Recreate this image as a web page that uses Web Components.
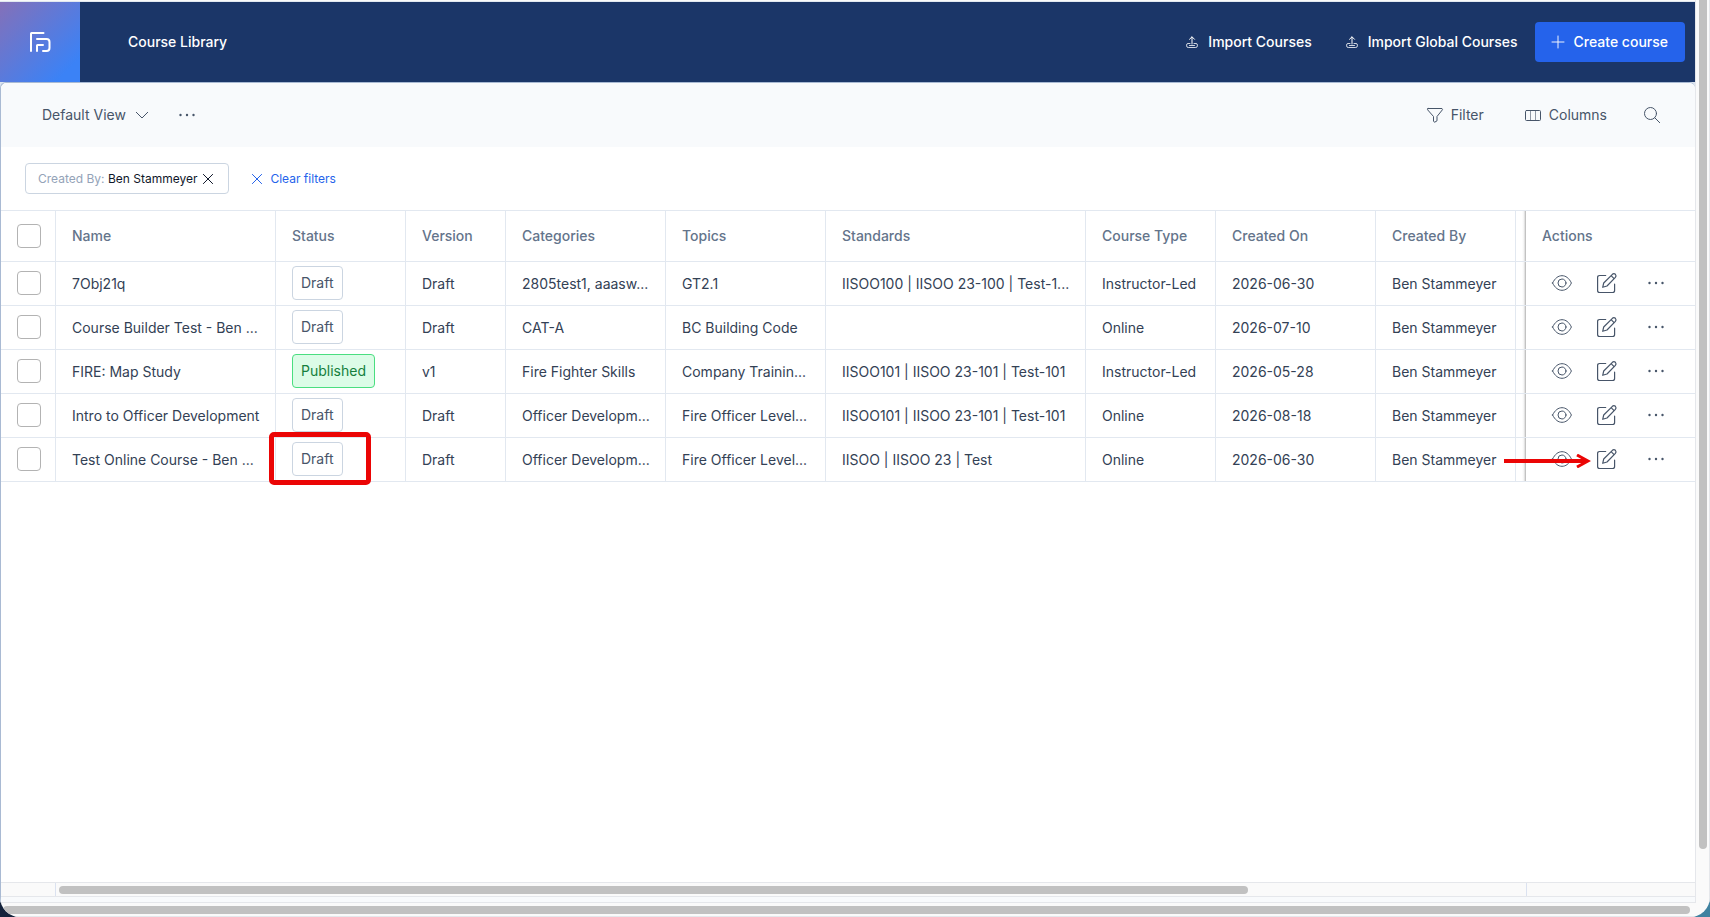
<!DOCTYPE html>
<html lang="en">
<head>
<meta charset="utf-8">
<title>Course Library</title>
<style>
body {
  margin: 0;
  background: linear-gradient(90deg, #14233c 0, #14233c 30%, #3f82a0 90%);
  color: #334155;
  font: 14px/20px Inter, "Liberation Sans", sans-serif;
}
</style>
</head>
<body>
<app-window>
  <app-header slot="header">
    <brand-logo slot="logo"></brand-logo>
    Course Library
    <ui-button slot="actions" kind="ghost" icon="upload" size="12">Import Courses</ui-button>
    <ui-button slot="actions" kind="ghost" icon="upload" size="12">Import Global Courses</ui-button>
    <ui-button slot="actions" kind="primary" icon="plus" size="12">Create course</ui-button>
  </app-header>
  <view-toolbar></view-toolbar>
  <filter-bar></filter-bar>
  <course-table></course-table>
</app-window>

<script>
const icons = {
  upload: ['0 0 12 12', '<path d="M6 8V1M3.500 3.300 6 .8l2.500 2.500"/><path stroke-opacity=".8" d="M4 7.500H2Q.6 7.500.6 9v.8q0 1.700 1.700 1.700h7.400q1.700 0 1.700-1.700V9q0-1.500-1.400-1.500H8M3.500 9.500h5"/>'],
  plus: ['0 0 13 13', '<path d="M6.500 0v13M0 6.500h13"/>'],
  chevron: ['0 0 12 12', '<path d="M.3 3.300 6 9l5.700-5.700"/>'],
  close: ['0 0 10 10', '<path d="m.4.4 9.200 9.200M9.600.4.4 9.600"/>'],
  dots: ['0 0 16 16', '<g fill="currentColor" stroke="none"><circle cx="1.500" cy="8" r="1.200"/><circle cx="8" cy="8" r="1.200"/><circle cx="14.500" cy="8" r="1.200"/></g>'],
  filter: ['0 0 16 16', '<path d="M1 1.500h14q.7.6.4 1.300L10 9.500v4.300L7.500 15.300 6.500 14V9.500L.6 2.800Q.4 2 1 1.500z"/>'],
  columns: ['0 0 16 16', '<path d="M1.500 3.500h13q1 0 1 1v8q0 1-1 1h-13q-1 0-1-1v-8q0-1 1-1z"/><path stroke-opacity=".6" d="M5.500 3.500v10M10.500 3.500v10"/>'],
  search: ['0 0 16 16', '<circle cx="6.500" cy="6.500" r="6"/><path d="m10.800 10.800 4.900 4.900"/>'],
  eye: ['0 0 20 20', '<path d="M.6 10C3 5 6.300 2.700 10 2.700S17 5 19.400 10C17 15 13.700 17.300 10 17.300S3 15 .6 10z"/><circle cx="10" cy="10" r="4"/>'],
  edit: ['0 0 20 20', '<g stroke-width="1.200"><path d="M8.700 2.500H2.600Q.6 2.500.6 4.500v13q0 2 2 2h13q2 0 2-2v-6.300"/><path d="M5.700 14.300l1-4.300L15.400 1.300q1.500-1.300 3 0 1.300 1.500 0 3L10 13zM14.100 2.600l3 3"/></g>']
}

function createTemplate (html) {
  const template = document.createElement('template')
  template.innerHTML = html
  return template
}

class BaseElement extends HTMLElement {
  constructor () {
    super()
    this.attachShadow({ mode: 'open' })
    this.shadowRoot.appendChild(this.constructor.template.content.cloneNode(true))
  }
}

class UiIcon extends BaseElement {
  static template = createTemplate(`
<style>
:host { display: inline-flex; flex: none; }
svg { display: block; overflow: visible; fill: none; stroke: currentColor; stroke-linecap: round; stroke-linejoin: round; }
</style>
<svg aria-hidden="true"></svg>
`)

  connectedCallback () {
    const svg = this.shadowRoot.querySelector('svg')
    const [box, shapes] = icons[this.getAttribute('name')]
    const size = this.getAttribute('size') || 16
    svg.setAttribute('viewBox', box)
    svg.setAttribute('width', size)
    svg.setAttribute('height', size)
    svg.innerHTML = shapes
  }
}
customElements.define('ui-icon', UiIcon)

class UiButton extends BaseElement {
  static template = createTemplate(`
<style>
:host { display: inline-flex; }
button {
  display: flex;
  align-items: center;
  gap: 8px;
  margin: 0;
  padding: 0;
  border: 0;
  border-radius: 4px;
  background: none;
  color: inherit;
  font: inherit;
  white-space: nowrap;
  cursor: pointer;
}
:host([kind]) button { gap: 10px; height: 40px; padding: 0 17px; color: #fff; font-weight: 500; }
:host([kind=primary]) button { background: #2563eb; }
:host([trailing]) button { flex-direction: row-reverse; gap: 10px; }
</style>
<button type="button"><slot></slot></button>
`)

  connectedCallback () {
    const button = this.shadowRoot.querySelector('button')
    const icon = document.createElement('ui-icon')
    icon.setAttribute('name', this.getAttribute('icon'))
    icon.setAttribute('size', this.getAttribute('size') || 16)
    button.prepend(icon)
    if (this.hasAttribute('label')) button.setAttribute('aria-label', this.getAttribute('label'))
  }
}
customElements.define('ui-button', UiButton)

class BrandLogo extends BaseElement {
  static template = createTemplate(`
<style>
:host {
  display: flex;
  align-items: center;
  justify-content: center;
  width: 80px;
  height: 80px;
  background: linear-gradient(135deg, #8470b8 0, #3b82f6 85%);
}
svg { fill: none; stroke: #fff; stroke-width: 2; stroke-linecap: round; stroke-linejoin: round; }
</style>
<svg width="22" height="22" viewBox="0 0 22 22" role="img" aria-label="Home">
  <path d="M2 20V2.500Q2 2 2.500 2H14.500M8 8h9.500q3 0 3 3v6q0 3-3 3H14M8 20v-5.500Q8 14 8.500 14H14"/>
</svg>
`)
}
customElements.define('brand-logo', BrandLogo)

class AppHeader extends BaseElement {
  static template = createTemplate(`
<style>
:host { display: block; background: #1b3668; color: #fff; }
header { display: flex; align-items: center; padding-right: 10px; }
h1 { flex: 1; margin: 0 48px; font: inherit; font-weight: 500; }
nav { display: flex; }
</style>
<header>
  <slot name="logo"></slot>
  <h1><slot></slot></h1>
  <nav><slot name="actions"></slot></nav>
</header>
`)
}
customElements.define('app-header', AppHeader)

class ViewToolbar extends BaseElement {
  static template = createTemplate(`
<style>
:host {
  display: flex;
  align-items: center;
  height: 64px;
  padding: 0 35px 0 41px;
  border-radius: 6px 6px 0 0;
  background: #f8fafc;
  color: #475569;
}
.views, .tools { display: flex; align-items: center; }
.views { flex: 1; gap: 31px; }
.tools { gap: 41px; }
.tools ui-button:last-child { margin-left: -4px; }
</style>
<div class="views">
  <ui-button icon="chevron" size="12" trailing>Default View</ui-button>
  <ui-button icon="dots" label="View options"></ui-button>
</div>
<div class="tools">
  <ui-button icon="filter">Filter</ui-button>
  <ui-button icon="columns">Columns</ui-button>
  <ui-button icon="search" label="Search"></ui-button>
</div>
`)
}
customElements.define('view-toolbar', ViewToolbar)

class FilterBar extends BaseElement {
  static template = createTemplate(`
<style>
:host { display: flex; align-items: center; gap: 23px; height: 63px; padding: 0 24px; font-size: 12px; }
.chip {
  display: flex;
  align-items: center;
  gap: 6px;
  height: 29px;
  padding: 0 15px 0 12px;
  border: 1px solid #cbd5e1;
  border-radius: 4px;
  color: #0f172a;
}
.chip span { color: #94a3b8; }
.clear { color: #2563eb; }
</style>
<div class="chip">
  <div><span>Created By:</span> Ben Stammeyer</div>
  <ui-button icon="close" size="10" label="Remove filter"></ui-button>
</div>
<ui-button class="clear" icon="close" size="10">Clear filters</ui-button>
`)
}
customElements.define('filter-bar', FilterBar)

class StatusBadge extends BaseElement {
  static template = createTemplate(`
<style>
:host {
  display: inline-block;
  padding: 6px 8px;
  border: 1px solid #cbd5e1;
  border-radius: 4px;
  background: #fff;
  color: #475569;
}
:host([published]) { border-color: #4ade80; background: #dcfce7; color: #15803d; }
</style>
<slot></slot>
`)
}
customElements.define('status-badge', StatusBadge)

class CalloutBox extends BaseElement {
  static template = createTemplate(`
<style>
:host {
  position: absolute;
  z-index: 2;
  inset: -6px 34px -4px -7px;
  border: 5px solid #eb0505;
  border-radius: 5px;
  pointer-events: none;
}
</style>
`)
}
customElements.define('callout-box', CalloutBox)

class CalloutArrow extends BaseElement {
  static template = createTemplate(`
<style>
:host { position: absolute; z-index: 2; top: 16px; left: -22px; pointer-events: none; }
svg { display: block; fill: none; stroke: #eb0505; }
</style>
<svg width="87" height="14" viewBox="0 0 87 14" aria-hidden="true">
  <path d="M0 7h82" stroke-width="4"/>
  <path d="M73 1l11 6-11 6" stroke-width="3"/>
</svg>
`)
}
customElements.define('callout-arrow', CalloutArrow)

const courses = [
  ['7Obj21q', 'Draft', 'Draft', '2805test1, aaasw...', 'GT2.1', 'IISOO100 | IISOO 23-100 | Test-1...', 'Instructor-Led', '2026-06-30'],
  ['Course Builder Test - Ben ...', 'Draft', 'Draft', 'CAT-A', 'BC Building Code', '', 'Online', '2026-07-10'],
  ['FIRE: Map Study', 'Published', 'v1', 'Fire Fighter Skills', 'Company Trainin...', 'IISOO101 | IISOO 23-101 | Test-101', 'Instructor-Led', '2026-05-28'],
  ['Intro to Officer Development', 'Draft', 'Draft', 'Officer Developm...', 'Fire Officer Level...', 'IISOO101 | IISOO 23-101 | Test-101', 'Online', '2026-08-18'],
  ['Test Online Course - Ben ...', 'Draft', 'Draft', 'Officer Developm...', 'Fire Officer Level...', 'IISOO | IISOO 23 | Test', 'Online', '2026-06-30', true]
]

class CourseTable extends BaseElement {
  static template = createTemplate(`
<style>
:host { display: flex; flex: 1; flex-direction: column; min-height: 0; }
.grid { flex: 1; min-height: 0; }
table { width: 100%; table-layout: fixed; border-collapse: separate; border-spacing: 0; border-top: 1px solid #e2e8f0; }
th, td {
  box-sizing: border-box;
  height: 44px;
  padding: 0 12px 0 16px;
  border-right: 1px solid #e2e8f0;
  border-bottom: 1px solid #e2e8f0;
  overflow: hidden;
  text-align: left;
  text-overflow: ellipsis;
  white-space: nowrap;
}
th { height: 51px; color: #64748b; font-weight: 500; }
.check { width: 55px; }
.name { width: 220px; }
.status, .type { width: 130px; }
.version { width: 100px; }
.categories, .topics, .on { width: 160px; }
.standards { width: 260px; }
.by { width: 140px; }
.actions { width: 169px; }
.fill { padding: 0; border-right: 0; }
.status, .actions { position: relative; overflow: visible; }
td.check, td.status, td.actions { padding-bottom: 2px; }
.actions { border-right: 0; background: #fff; }
.actions::before {
  content: "";
  position: absolute;
  top: 0;
  bottom: 0;
  left: -4px;
  width: 4px;
  background: linear-gradient(90deg, #0000, #0000000d 50%, #0000004d);
}
.buttons { display: flex; align-items: center; gap: 25px; padding-left: 10px; color: #475569; }
.buttons ui-button:last-child { margin-left: 6px; }
input {
  display: block;
  appearance: none;
  box-sizing: border-box;
  width: 24px;
  height: 24px;
  margin: 0;
  border: 1px solid #b3b3b3;
  border-radius: 4px;
  background: #fff;
}
.footer { display: flex; height: 13px; border: solid #e5e7eb; border-width: 1px 0; background: #fafafa; }
.footer .pin { box-sizing: border-box; width: 55px; border-right: 1px solid #dbe2f0; }
.footer .end { box-sizing: border-box; width: 169px; border-left: 1px solid #dbe2f0; }
.footer .track { flex: 1; padding: 3px; }
.footer .thumb { width: 81.2%; height: 8px; border-radius: 4px; background: #c1c1c1; }
.base { height: 5px; border-bottom: 1px solid #e5e7eb; background: #f8fafc; }
</style>
<div class="grid">
<table>
  <thead>
    <tr>
      <th class="check"><input type="checkbox" aria-label="Select all courses"></th>
      <th class="name">Name</th>
      <th class="status">Status</th>
      <th class="version">Version</th>
      <th class="categories">Categories</th>
      <th class="topics">Topics</th>
      <th class="standards">Standards</th>
      <th class="type">Course Type</th>
      <th class="on">Created On</th>
      <th class="by">Created By</th>
      <th class="fill"></th>
      <th class="actions">Actions</th>
    </tr>
  </thead>
  <tbody></tbody>
</table>
</div>
<div class="footer"><div class="pin"></div><div class="track"><div class="thumb"></div></div><div class="end"></div></div>
<div class="base"></div>
`)

  connectedCallback () {
    this.shadowRoot.querySelector('tbody').innerHTML = courses.map(c => this._row(c)).join('')
  }

  _row ([name, status, version, categories, topics, standards, type, created, marked]) {
    return `
<tr>
  <td class="check"><input type="checkbox" aria-label="Select ${name}"></td>
  <td>${name}</td>
  <td class="status"><status-badge${status === 'Published' ? ' published' : ''}>${status}</status-badge>${marked ? '<callout-box></callout-box>' : ''}</td>
  <td>${version}</td>
  <td>${categories}</td>
  <td>${topics}</td>
  <td>${standards}</td>
  <td>${type}</td>
  <td>${created}</td>
  <td>Ben Stammeyer</td>
  <td class="fill"></td>
  <td class="actions">
    <div class="buttons">
      <ui-button icon="eye" size="20" label="View"></ui-button>
      <ui-button icon="edit" size="20" label="Edit"></ui-button>
      <ui-button icon="dots" label="More"></ui-button>
    </div>${marked ? '<callout-arrow></callout-arrow>' : ''}
  </td>
</tr>`
  }
}
customElements.define('course-table', CourseTable)

class AppWindow extends BaseElement {
  static template = createTemplate(`
<style>
:host {
  display: grid;
  grid-template-columns: 1fr 15px;
  grid-template-rows: 1fr 14px;
  box-sizing: border-box;
  height: 100vh;
  overflow: hidden;
  border-radius: 0 0 20px 20px;
  background: #fafafa;
}
.page { display: flex; flex-direction: column; min-width: 0; min-height: 0; border-top: 1px solid #e2e8f0; margin-top: 1px; background: #dbe3ee; }
.panel {
  display: flex;
  flex: 1;
  flex-direction: column;
  min-height: 0;
  border: solid #a9bad3;
  border-width: 1px 0 0 1px;
  border-radius: 6px 6px 0 0;
  background: #fff;
}
.vertical { padding: 0 2px 0 3px; border: solid #e5e7eb; border-width: 0 1px; }
.vertical div { width: 8px; height: 94%; border-radius: 0 0 4px 4px; background: #c1c1c1; }
.horizontal { grid-column: 1 / 3; padding: 3px 20px 2px 3px; border-bottom: 1px solid #e5e7eb; }
.horizontal div { height: 8px; border-radius: 4px; background: #c1c1c1; }
</style>
<div class="page">
  <slot name="header"></slot>
  <div class="panel"><slot></slot></div>
</div>
<div class="vertical"><div></div></div>
<div class="horizontal"><div></div></div>
`)
}
customElements.define('app-window', AppWindow)
</script>
</body>
</html>
